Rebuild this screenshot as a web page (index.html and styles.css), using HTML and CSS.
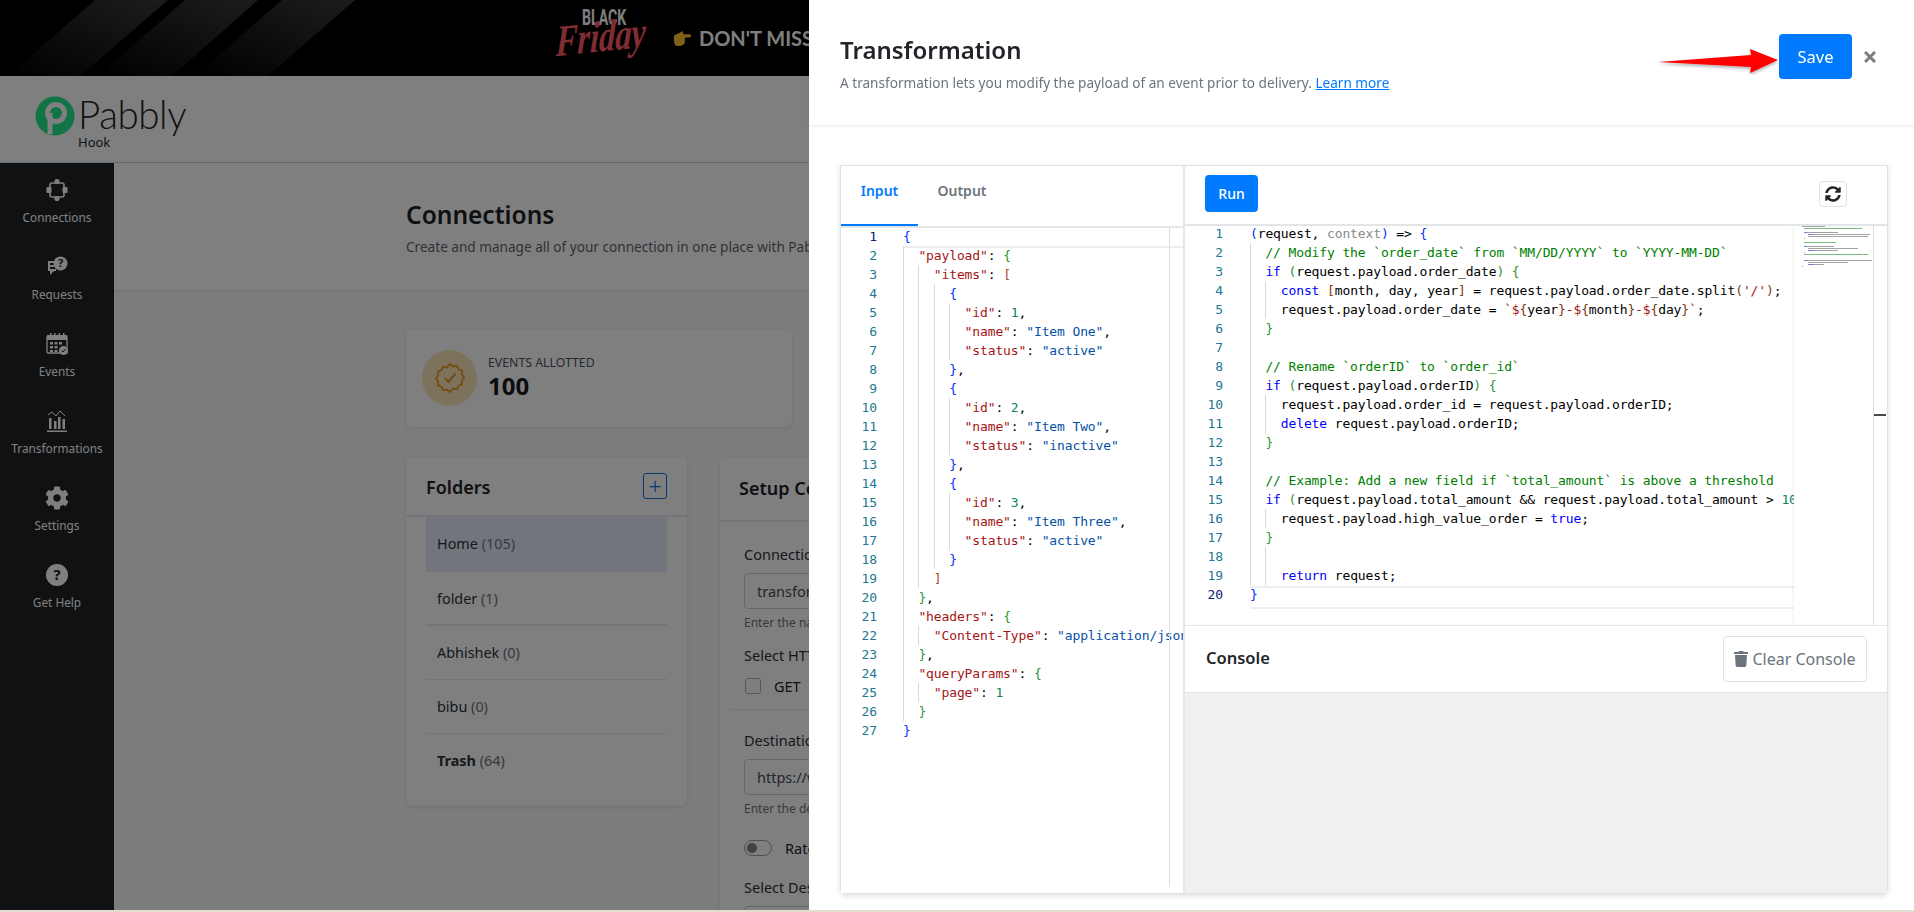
FILE: index.html
```html
<!DOCTYPE html>
<html lang="en">
<head>
<meta charset="utf-8">
<title>Pabbly Hook - Transformation</title>
<link rel="stylesheet" href="styles.css">
</head>
<body>
<div class="app">
  <div class="banner">
    <svg class="stripes" viewBox="0 0 400 76" width="400" height="76"><defs><linearGradient id="sg" x1="0" y1="1" x2="1" y2="0"><stop offset="0" stop-color="#000"/><stop offset="1" stop-color="#3a3a3a"/></linearGradient></defs><polygon points="8,76 95,0 168,0 80,76" fill="url(#sg)"/><polygon points="98,76 185,0 258,0 172,76" fill="url(#sg)"/><polygon points="195,76 282,0 355,0 268,76" fill="url(#sg)"/></svg>
    <div class="promo">
      <div class="bf"><span class="bf-black">BLACK</span><span class="bf-friday">Friday</span></div>
      <svg class="hand" viewBox="0 0 20 17" width="19" height="17"><path d="M1 7Q1 4 4 4L8 2 10 0.500 11 4H18Q20 5 18 7.500H12.500V13Q10.500 16.500 6 16.500H3.500Q1 14.500 1 11Z" fill="#ffc52e"/></svg>
      <span class="promo-text">DON'T MISS OUT</span>
    </div>
  </div>
  <header class="topbar">
    <svg class="logo-mark" viewBox="0 0 40 40" width="40" height="40"><circle cx="20" cy="20" r="19.5" fill="#24e88c"/><circle cx="21" cy="17" r="8.5" fill="none" stroke="#fff" stroke-width="5"/><path d="M12.5 17v21h5V17z" fill="#fff"/></svg>
    <div class="logo-text"><span class="logo-name">Pabbly</span><span class="logo-sub">Hook</span></div>
  </header>
  <div class="layout">
    <nav class="sidebar">
      <a class="nav-item">
        <svg viewBox="0 0 24 24" width="24" height="24" fill="#fff"><rect x="5" y="5" width="14" height="14" rx="2" fill="none" stroke="#fff" stroke-width="1.6"/><circle cx="12" cy="3.5" r="2.6"/><circle cx="12" cy="20.5" r="2.6"/><rect x="1.5" y="9" width="5" height="6" rx="1"/><rect x="17.5" y="9" width="5" height="6" rx="1"/></svg>
        <span>Connections</span>
      </a>
      <a class="nav-item">
        <svg viewBox="0 0 24 24" width="24" height="24" fill="#fff"><circle cx="15.5" cy="8.5" r="7"/><path d="M3 6h6v2H5v2h4v2H5v2h6v2H9l-4 4v-4H3z"/><text x="15.5" y="12" text-anchor="middle" class="svg-q">?</text></svg>
        <span>Requests</span>
      </a>
      <a class="nav-item">
        <svg viewBox="0 0 24 24" width="24" height="24" fill="#fff"><path d="M3 4h18a1 1 0 0 1 1 1v16H3a1 1 0 0 1-1-1V5a1 1 0 0 1 1-1z" fill="none" stroke="#fff" stroke-width="1.3"/><path d="M2 3h20v5H2z"/><path d="M5 1h1.500v3H5zM9 1h1.500v3H9zM13.500 1H15v3h-1.500zM18 1h1.500v3H18z"/><path d="M5 10h3v2.500H5zM9.500 10h3v2.500h-3zM14 10h3v2.500h-3zM5 14h3v2.500H5zM9.500 14h3v2.500h-3zM5 18h3v2H5zM9.500 18h3v2h-3z"/><circle cx="18.500" cy="18.500" r="4.500"/><path d="M16.500 18.500l1.500 1.500 2.500-3" fill="none" stroke="#202226" stroke-width="1"/></svg>
        <span>Events</span>
      </a>
      <a class="nav-item">
        <svg viewBox="0 0 24 24" width="24" height="24" fill="#fff"><path d="M4 9h2.500v11H4zM9 12h2.500v8H9zM13 8h2.500v12H13zM17.500 10H20v10h-2.500zM2 21.500h20V23H2z"/><path d="M3 6l4-3 4 4 4-5 5 5" fill="none" stroke="#fff" stroke-width="1"/></svg>
        <span>Transformations</span>
      </a>
      <a class="nav-item">
        <svg viewBox="0 0 512 512" width="24" height="24" fill="#fff"><path d="M487.400 315.700l-42.600-24.600c4.300-23.200 4.300-47 0-70.200l42.600-24.600c4.900-2.800 7.100-8.600 5.500-14-11.100-35.600-30-67.800-54.700-94.600-3.800-4.100-10-5.100-14.800-2.300L380.800 110c-17.900-15.400-38.500-27.300-60.800-35.100V25.800c0-5.600-3.900-10.500-9.400-11.700-36.700-8.200-74.300-7.800-109.200 0-5.500 1.200-9.400 6.100-9.400 11.700V75c-22.200 7.900-42.800 19.800-60.800 35.100L88.700 85.500c-4.900-2.800-11-1.900-14.800 2.300-24.700 26.700-43.600 58.900-54.700 94.600-1.700 5.400.6 11.200 5.500 14L67.300 221c-4.300 23.200-4.300 47 0 70.200l-42.600 24.600c-4.900 2.800-7.100 8.600-5.500 14 11.100 35.600 30 67.800 54.700 94.600 3.800 4.100 10 5.100 14.800 2.300l42.600-24.600c17.900 15.400 38.500 27.300 60.800 35.100v49.200c0 5.600 3.900 10.500 9.400 11.700 36.700 8.200 74.300 7.800 109.200 0 5.500-1.200 9.400-6.100 9.400-11.700v-49.200c22.200-7.900 42.800-19.800 60.800-35.100l42.600 24.600c4.900 2.800 11 1.900 14.800-2.300 24.700-26.700 43.600-58.900 54.700-94.600 1.500-5.500-.7-11.300-5.600-14.100zM256 336c-44.100 0-80-35.900-80-80s35.900-80 80-80 80 35.900 80 80-35.900 80-80 80z"/></svg>
        <span>Settings</span>
      </a>
      <a class="nav-item">
        <svg viewBox="0 0 24 24" width="24" height="24"><circle cx="12" cy="12" r="11" fill="#fff"/><text x="12" y="17" text-anchor="middle" class="svg-help">?</text></svg>
        <span>Get Help</span>
      </a>
    </nav>
    <main class="content">
      <section class="page-head">
        <h1>Connections</h1>
        <p>Create and manage all of your connection in one place with Pabbly Hook.</p>
      </section>
      <section class="page-body">
        <div class="stat-card">
          <div class="stat-icon"><svg viewBox="0 0 32 32" width="32" height="32" fill="none" stroke="#e8961e" stroke-width="1.700"><path d="M16 2l3 2.500 3.800-.8 1.700 3.500 3.600 1.400-.3 3.900 2.400 3-2.400 3 .3 3.900-3.600 1.400-1.700 3.500-3.800-.8L16 30l-3-2.500-3.800.8-1.700-3.500-3.600-1.400.3-3.900-2.400-3 2.400-3-.3-3.900 3.600-1.400 1.700-3.500 3.800.8z"/><path d="M11 16.500l3.500 3.500 7-8.500" stroke-width="2"/></svg></div>
          <div class="stat-text"><span class="stat-label">EVENTS ALLOTTED</span><strong class="stat-value">100</strong></div>
        </div>
        <div class="columns">
          <aside class="folders">
            <div class="folders-head"><h2>Folders</h2><button class="plus-btn">+</button></div>
            <ul class="folder-list">
              <li class="active">Home <em>(105)</em></li>
              <li>folder <em>(1)</em></li>
              <li>Abhishek <em>(0)</em></li>
              <li>bibu <em>(0)</em></li>
              <li class="trash"><b>Trash</b> <em>(64)</em></li>
            </ul>
          </aside>
          <section class="setup">
            <h2 class="setup-title">Setup Connection</h2>
            <div class="setup-body">
              <label class="field-label">Connection Name</label>
              <div class="input">transformation connection</div>
              <small class="hint">Enter the name of the connection</small>
              <label class="field-label second">Select HTTP Method</label>
              <div class="check-row"><span class="check"></span><span>GET</span></div>
              <hr class="setup-rule">
              <label class="field-label">Destination URL</label>
              <div class="input">https://webhook.site/example</div>
              <small class="hint">Enter the destination URL</small>
              <div class="toggle-row"><span class="toggle"></span><span>Rate Limit</span></div>
              <label class="field-label third">Select Destination</label>
              <div class="input"></div>
            </div>
          </section>
        </div>
      </section>
    </main>
  </div>
</div>
<div class="backdrop"></div>
<aside class="drawer">
  <header class="drawer-head">
    <div>
      <h2>Transformation</h2>
      <p>A transformation lets you modify the payload of an event prior to delivery. <a>Learn more</a></p>
    </div>
    <div class="drawer-actions">
      <button class="btn-save">Save</button>
      <svg class="close" viewBox="0 0 12 12" width="12" height="12"><path d="M1 1l10 10M11 1L1 11" stroke="#7d7d7d" stroke-width="3"/></svg>
    </div>
    <svg class="arrow" viewBox="0 0 122 26" width="122" height="26"><defs><filter id="as" x="-5%" y="-20%" width="110%" height="160%"><feDropShadow dx="0" dy="2" stdDeviation="1.500" flood-color="#000" flood-opacity=".3"/></filter></defs><polygon points="0,13 93,6 92,0 120,11 92,24 93,18" fill="#f00" filter="url(#as)"/></svg>
  </header>
  <div class="drawer-body">
    <div class="editor-card">
      <section class="pane-left">
        <div class="tabs"><span class="tab active">Input</span><span class="tab">Output</span></div>
        <div class="code-area left-code">
          <div class="gutter"><i class="cur">1</i><i>2</i><i>3</i><i>4</i><i>5</i><i>6</i><i>7</i><i>8</i><i>9</i><i>10</i><i>11</i><i>12</i><i>13</i><i>14</i><i>15</i><i>16</i><i>17</i><i>18</i><i>19</i><i>20</i><i>21</i><i>22</i><i>23</i><i>24</i><i>25</i><i>26</i><i>27</i></div>
<pre class="code"><span class="line hl"><b class="bl">{</b></span>
<span class="line">  <u class="k">"payload"</u>: <b class="gr">{</b></span>
<span class="line">    <u class="k">"items"</u>: <b class="br">[</b></span>
<span class="line">      <b class="bl">{</b></span>
<span class="line">        <u class="k">"id"</u>: <u class="n">1</u>,</span>
<span class="line">        <u class="k">"name"</u>: <u class="s">"Item One"</u>,</span>
<span class="line">        <u class="k">"status"</u>: <u class="s">"active"</u></span>
<span class="line">      <b class="bl">}</b>,</span>
<span class="line">      <b class="bl">{</b></span>
<span class="line">        <u class="k">"id"</u>: <u class="n">2</u>,</span>
<span class="line">        <u class="k">"name"</u>: <u class="s">"Item Two"</u>,</span>
<span class="line">        <u class="k">"status"</u>: <u class="s">"inactive"</u></span>
<span class="line">      <b class="bl">}</b>,</span>
<span class="line">      <b class="bl">{</b></span>
<span class="line">        <u class="k">"id"</u>: <u class="n">3</u>,</span>
<span class="line">        <u class="k">"name"</u>: <u class="s">"Item Three"</u>,</span>
<span class="line">        <u class="k">"status"</u>: <u class="s">"active"</u></span>
<span class="line">      <b class="bl">}</b></span>
<span class="line">    <b class="br">]</b></span>
<span class="line">  <b class="gr">}</b>,</span>
<span class="line">  <u class="k">"headers"</u>: <b class="gr">{</b></span>
<span class="line">    <u class="k">"Content-Type"</u>: <u class="s">"application/json"</u></span>
<span class="line">  <b class="gr">}</b>,</span>
<span class="line">  <u class="k">"queryParams"</u>: <b class="gr">{</b></span>
<span class="line">    <u class="k">"page"</u>: <u class="n">1</u></span>
<span class="line">  <b class="gr">}</b></span>
<span class="line"><b class="bl">}</b></span></pre>
          <div class="guides-left"></div>
        </div>
      </section>
      <section class="pane-right">
        <div class="run-bar">
          <button class="btn-run">Run</button>
          <button class="btn-refresh"><svg viewBox="0 0 512 512" width="16" height="16" fill="#212529"><path d="M370.720 133.280C339.458 104.008 298.888 87.962 255.848 88c-77.458.068-144.328 53.178-162.791 126.850-1.344 5.363-6.122 9.150-11.651 9.150H24.103c-7.498 0-13.194-6.807-11.807-14.176C33.933 94.924 134.813 8 256 8c66.448 0 126.791 26.136 171.315 68.685L463.030 40.970C478.149 25.851 504 36.559 504 57.941V192c0 13.255-10.745 24-24 24H345.941c-21.382 0-32.090-25.851-16.971-40.971l41.750-41.749zM32 296h134.059c21.382 0 32.090 25.851 16.971 40.971l-41.750 41.750c31.262 29.273 71.835 45.319 114.876 45.280 77.418-.070 144.315-53.144 162.787-126.849 1.344-5.363 6.122-9.150 11.651-9.150h57.304c7.498 0 13.194 6.807 11.807 14.176C478.067 417.076 377.187 504 256 504c-66.448 0-126.791-26.136-171.315-68.685L48.970 471.030C33.851 486.149 8 475.441 8 454.059V320c0-13.255 10.745-24 24-24z"/></svg></button>
        </div>
        <div class="code-area right-code">
          <div class="gutter"><i>1</i><i>2</i><i>3</i><i>4</i><i>5</i><i>6</i><i>7</i><i>8</i><i>9</i><i>10</i><i>11</i><i>12</i><i>13</i><i>14</i><i>15</i><i>16</i><i>17</i><i>18</i><i>19</i><i class="cur">20</i></div>
          <div class="code-clip">
<pre class="code"><span class="line"><b class="bl">(</b>request, <u class="dim">context</u><b class="bl">)</b> =&gt; <b class="bl">{</b></span>
<span class="line">  <u class="c">// Modify the `order_date` from `MM/DD/YYYY` to `YYYY-MM-DD`</u></span>
<span class="line">  <u class="kw">if</u> <b class="gr">(</b>request.payload.order_date<b class="gr">)</b> <b class="gr">{</b></span>
<span class="line">    <u class="kw">const</u> <b class="br">[</b>month, day, year<b class="br">]</b> = request.payload.order_date.split<b class="br">(</b><u class="str">'/'</u><b class="br">)</b>;</span>
<span class="line">    request.payload.order_date = <u class="str">`$</u><b class="br">{</b>year<b class="br">}</b><u class="str">-$</u><b class="br">{</b>month<b class="br">}</b><u class="str">-$</u><b class="br">{</b>day<b class="br">}</b><u class="str">`</u>;</span>
<span class="line">  <b class="gr">}</b></span>
<span class="line"> </span>
<span class="line">  <u class="c">// Rename `orderID` to `order_id`</u></span>
<span class="line">  <u class="kw">if</u> <b class="gr">(</b>request.payload.orderID<b class="gr">)</b> <b class="gr">{</b></span>
<span class="line">    request.payload.order_id = request.payload.orderID;</span>
<span class="line">    <u class="kw">delete</u> request.payload.orderID;</span>
<span class="line">  <b class="gr">}</b></span>
<span class="line"> </span>
<span class="line">  <u class="c">// Example: Add a new field if `total_amount` is above a threshold</u></span>
<span class="line">  <u class="kw">if</u> <b class="gr">(</b>request.payload.total_amount &amp;&amp; request.payload.total_amount &gt; <u class="n">1000</u><b class="gr">)</b> <b class="gr">{</b></span>
<span class="line">    request.payload.high_value_order = <u class="kw">true</u>;</span>
<span class="line">  <b class="gr">}</b></span>
<span class="line"> </span>
<span class="line">    <u class="kw">return</u> request;</span>
<span class="line"><b class="bl">}</b></span></pre>
            <div class="guides-right"></div>
          </div>
          <div class="minimap" aria-hidden="true">
            <svg viewBox="0 0 78 42" width="78" height="42"><path class="mm-ink" d="M8 .5h23M10 6.500h34M14 8.500h62M14 10.500h60M10 12.500h1M10 20.500h30M14 22.500h50M14 24.500h30M10 26.500h1M10 34.500h68M14 36.500h40M14 38.500h16M8 40.500h1"/><path class="mm-green" d="M10 2.500h58M10 16.500h32M10 28.500h64"/><path class="mm-blue" d="M10 6.500h3M14 8.500h5M10 20.500h3M14 24.500h6M10 34.500h3M14 38.500h6"/></svg>
          </div>
          <div class="scroll-strip"><span class="tick"></span></div>
        </div>
        <div class="console-bar">
          <h3>Console</h3>
          <button class="btn-clear"><svg viewBox="0 0 448 512" width="14" height="16" fill="#6c757d"><path d="M432 32H312l-9.400-18.700A24 24 0 0 0 281.100 0H166.800a23.700 23.700 0 0 0-21.400 13.300L136 32H16A16 16 0 0 0 0 48v32a16 16 0 0 0 16 16h416a16 16 0 0 0 16-16V48a16 16 0 0 0-16-16zM53.200 467a48 48 0 0 0 47.900 45h245.800a48 48 0 0 0 47.900-45L416 128H32z"/></svg>Clear Console</button>
        </div>
        <div class="console-out"></div>
      </section>
    </div>
  </div>
</aside>
<div class="screen-edge"></div>
</body>
</html>
```

FILE: styles.css
```css
* { box-sizing: border-box; }
html, body { margin: 0; height: 100%; overflow: hidden; }
body { font-family: "Noto Sans", "Open Sans", sans-serif; color: #212529; background: #f8f9fb; }
h1, h2, h3, p, ul { margin: 0; padding: 0; }
button { font-family: inherit; }

.app { height: 912px; display: flex; flex-direction: column; overflow: hidden; }

/* Top promo */
.banner { position: relative; flex: 0 0 76px; background: #000; overflow: hidden; }
.stripes { display: block; }
.promo { position: absolute; left: 556px; top: 0; height: 76px; display: flex; align-items: center; white-space: nowrap; }
.bf { position: relative; width: 104px; height: 76px; }
.bf-black { position: absolute; left: 26px; top: 6px; font: 700 22px/24px "Roboto", sans-serif; color: #fff; transform: scaleX(.64); transform-origin: left center; }
.bf-friday { position: absolute; left: 0; top: 20px; font: italic 700 44px/44px "Liberation Serif", serif; color: #ff5a64; transform: rotate(-6deg) skewX(-8deg) scaleX(.74); transform-origin: left center; }
.hand { margin-left: 13px; flex: none; }
.promo-text { margin-left: 7px; font: 700 20px/28px "Lato", sans-serif; color: #fff; }

/* Logo bar */
.topbar { flex: 0 0 87px; background: #fff; border-bottom: 1px solid #c9d5ea; display: flex; align-items: flex-start; padding: 20px 0 0 35px; gap: 3px; }
.logo-mark { display: block; }
.logo-text { display: flex; flex-direction: column; }
.logo-name { font: 300 38.500px/42px "Lato", sans-serif; color: #20252b; margin-top: -3px; letter-spacing: -.4px; }
.logo-sub { font: 400 13px/16px "Noto Sans", sans-serif; color: #20252b; margin-top: -1px; }

.layout { flex: 1; display: flex; min-height: 0; }
.sidebar { flex: 0 0 114px; background: #202226; display: flex; flex-direction: column; padding-top: 15px; }
.nav-item { height: 77px; display: flex; flex-direction: column; align-items: center; color: #fff; font-size: 11.800px; line-height: 16px; }
.nav-item svg { flex: none; margin-bottom: 7px; }
.svg-q { font: 700 11px "Noto Sans", sans-serif; fill: #202226; }
.svg-help { font: 700 15px "Noto Sans", sans-serif; fill: #202226; }

.content { flex: 1; min-width: 0; display: flex; flex-direction: column; }
.page-head { height: 127px; background: #fff; padding: 34px 0 0 292px; box-shadow: 0 1px 3px rgba(60,70,90,.12); }
.page-head h1 { font-size: 24.500px; line-height: 36px; font-weight: 600; color: #1d2228; }
.page-head p { font-size: 13.600px; line-height: 20px; margin-top: 4px; color: #5d6672; white-space: nowrap; }
.page-body { padding: 39px 0 0 292px; flex: 1; min-height: 0; }

.stat-card { width: 386px; height: 98px; background: #fff; border-radius: 6px; box-shadow: 0 1px 4px rgba(60,70,90,.15); display: flex; align-items: center; padding-left: 16px; gap: 11px; }
.stat-icon { width: 55px; height: 56px; border-radius: 50%; background: #fbe4b8; display: flex; align-items: center; justify-content: center; }
.stat-text { display: flex; flex-direction: column; }
.stat-label { font-size: 12.300px; line-height: 16px; color: #4b5563; }
.stat-value { font-size: 24px; line-height: 30px; font-weight: 700; color: #14181d; }

.columns { display: flex; gap: 33px; margin-top: 30px; align-items: flex-start; }
.folders { flex: 0 0 281px; height: 349px; background: #fff; border-radius: 6px; box-shadow: 0 1px 4px rgba(60,70,90,.15); }
.folders-head { height: 60px; padding: 0 20px 0 20px; display: flex; align-items: center; justify-content: space-between; border-bottom: 2px solid #e6ebf4; }
.folders-head h2 { font-size: 18px; line-height: 26px; padding-top: 2px; font-weight: 600; color: #1d2228; }
.plus-btn { width: 24px; height: 26px; padding: 0; border: 1px solid #0a6fe0; border-radius: 3px; background: #fff; color: #0a6fe0; font-size: 23px; font-weight: 300; line-height: 22px; }
.folder-list { list-style: none; padding: 0 20px; }
.folder-list li { height: 54px; line-height: 54px; padding-left: 11px; font-size: 14.400px; color: #2b3138; border-bottom: 1px solid #e3e8f1; }
.folder-list li em { font-style: normal; color: #6b7480; }
.folder-list li.active { height: 55px; background: #e4ebf6; border-bottom: 0; }
.folder-list li.active + li { border-bottom: 2px solid #e6ebf4; }
.folder-list li.trash { border-bottom: 0; }

.setup { flex: 0 0 700px; height: 600px; background: #fff; border-radius: 6px; box-shadow: 0 1px 4px rgba(60,70,90,.15); }
.setup-title { height: 65px; line-height: 62px; padding-left: 19px; font-size: 18px; font-weight: 600; border-bottom: 2px solid #e6ebf4; color: #1d2228; white-space: nowrap; }
.setup-body { padding: 22px 25px 0 24px; display: flex; flex-direction: column; align-items: stretch; }
.field-label { font-size: 14.500px; line-height: 20px; color: #2b3138; }
.field-label.second { margin-top: 14px; }
.field-label.third { margin-top: 19px; }
.input { height: 36px; flex: none; margin-top: 9px; padding: 0 12px; line-height: 34px; border: 1px solid #c8ced8; border-radius: 4px; font-size: 14.500px; color: #444c56; }
.hint { font-size: 12px; line-height: 16px; margin-top: 6px; color: #6c757d; }
.check-row { display: flex; align-items: center; gap: 13px; margin-top: 11px; font-size: 14.500px; line-height: 20px; }
.check { width: 16px; height: 16px; border: 1px solid #aab1bc; border-radius: 3px; margin-left: 1px; }
.setup-rule { margin: 13px 0 0 -15px; border: 0; border-top: 1px solid #e6ebf4; height: 21px; flex: none; }
.toggle-row { display: flex; align-items: center; gap: 13px; margin-top: 21px; font-size: 14.500px; line-height: 20px; }
.toggle { width: 28px; height: 16px; border: 1px solid #9aa2ad; border-radius: 9px; position: relative; }
.toggle::before { content: ""; position: absolute; left: 2px; top: 2px; width: 10px; height: 10px; border-radius: 50%; background: #7e8793; }

/* Overlays */
.backdrop { position: fixed; inset: 0; background: rgba(0,0,0,.5); }
.screen-edge { position: fixed; left: 0; right: 0; bottom: 0; height: 2px; background: #e3dcd0; }

.drawer { position: fixed; left: 809px; top: 0; width: 1105px; height: 912px; background: #fff; display: flex; flex-direction: column; }
.drawer-head { position: relative; flex: 0 0 125px; padding: 34px 38px 0 31px; display: flex; justify-content: space-between; align-items: flex-start; box-shadow: 0 1px 3px rgba(0,0,0,.1); }
.drawer-head h2 { font-size: 24px; line-height: 32px; font-weight: 600; color: #212529; }
.drawer-head p { font-size: 13.600px; line-height: 20px; margin-top: 7px; color: #6c757d; }
.drawer-head a { color: #007bff; text-decoration: underline; }
.drawer-actions { display: flex; align-items: center; gap: 12px; }
.btn-save { width: 73px; height: 45px; border: 0; border-radius: 4px; background: #007bff; color: #fff; font-size: 16.500px; }
.close { display: block; }
.arrow { position: absolute; left: 849px; top: 49px; }

.drawer-body { flex: 1; padding: 40px 26px 18px 31px; min-height: 0; }
.editor-card { height: 100%; display: flex; border: 1px solid #e0e2e6; border-radius: 0 0 5px 5px; box-shadow: 0 2px 5px rgba(40,50,70,.16); }
.pane-left { flex: 0 0 344px; display: flex; flex-direction: column; min-height: 0; border-right: 2px solid #e4e5e9; }
.tabs { flex: 0 0 60px; display: flex; border-bottom: 2px solid #e4e5e9; }
.tab { height: 60px; padding: 13px 0 0; font-size: 14px; line-height: 24px; font-weight: 600; color: #6c757d; text-align: center; }
.tab:first-child { width: 77px; color: #007bff; border-bottom: 2px solid #007bff; }
.tab:nth-child(2) { width: 62px; margin-left: 13px; }

.code-area { position: relative; display: flex; flex: 1; min-height: 0; overflow: hidden; background: #fff; }
.gutter { flex: none; display: flex; flex-direction: column; margin-top: -2px; text-align: right; }
.gutter i { font: 400 13px/19px "DejaVu Sans Mono", "Liberation Mono", monospace; letter-spacing: -.126px; color: #237893; height: 19px; flex: none; }
.gutter i.cur { color: #0b216f; }
.code { position: relative; margin: -2px 0 0; font: 400 13px/19px "DejaVu Sans Mono", "Liberation Mono", monospace; letter-spacing: -.126px; color: #000; white-space: pre; }
.code b { font-weight: 400; }
.code u { text-decoration: none; }
.line { display: inline-block; height: 19px; vertical-align: top; }
.k { color: #a31515; } .s { color: #0451a5; } .n { color: #098658; }
.bl { color: #0431fa; } .gr { color: #319331; } .br { color: #7b3814; }
.pane-left .br { color: #a0522d; }
.c { color: #008000; } .kw { color: #0000ff; } .str { color: #a31515; } .dim { color: #8a8a8a; }

.left-code .gutter { width: 36px; margin: -1px 26px 0 0; }
.left-code .code { flex: none; max-width: 280px; overflow: hidden; margin-top: -1px; }
.left-code::before { content: ""; position: absolute; left: 62px; right: 0; top: 0; height: 18px; border-bottom: 2px solid #eee; }
.left-code::after { content: ""; position: absolute; left: 328px; top: 0; bottom: 6px; width: 1px; background: #dcdcdc; }
.guides-left { position: absolute; inset: 0; pointer-events: none;
  background:
    linear-gradient(#d9d9d9,#d9d9d9) 62px 18px/1px 475px no-repeat,
    linear-gradient(#d9d9d9,#d9d9d9) 77px 37px/1px 323px no-repeat,
    linear-gradient(#d9d9d9,#d9d9d9) 77px 398px/1px 19px no-repeat,
    linear-gradient(#d9d9d9,#d9d9d9) 77px 455px/1px 19px no-repeat,
    linear-gradient(#d9d9d9,#d9d9d9) 93px 56px/1px 285px no-repeat,
    linear-gradient(#d9d9d9,#d9d9d9) 108px 75px/1px 57px no-repeat,
    linear-gradient(#d9d9d9,#d9d9d9) 108px 170px/1px 57px no-repeat,
    linear-gradient(#d9d9d9,#d9d9d9) 108px 265px/1px 57px no-repeat; }

.pane-right { flex: 1; min-width: 0; display: flex; flex-direction: column; }
.run-bar { flex: 0 0 60px; display: flex; align-items: center; justify-content: space-between; padding: 0 40px 3px 20px; border-bottom: 2px solid #e4e5e9; }
.btn-run { width: 53px; height: 37px; border: 0; border-radius: 4px; background: #007bff; color: #fff; font-size: 14px; font-weight: 500; }
.btn-refresh { width: 28px; height: 26px; padding: 0; border: 1px solid #dee2e6; border-radius: 4px; background: #fff; display: flex; align-items: center; justify-content: center; }

.right-code { flex: 0 0 399px; }
.right-code .gutter { width: 38px; margin-right: 27px; }
.code-clip { position: relative; flex: none; width: 544px; overflow: hidden; height: 100%; }
.code-clip::after { content: ""; position: absolute; left: 0; right: 0; top: 360px; height: 19px; border-top: 2px solid #eee; border-bottom: 2px solid #eee; }
.guides-right { position: absolute; inset: 0; pointer-events: none;
  background:
    linear-gradient(#d9d9d9,#d9d9d9) 0 17px/1px 342px no-repeat,
    linear-gradient(#d9d9d9,#d9d9d9) 15px 55px/1px 38px no-repeat,
    linear-gradient(#d9d9d9,#d9d9d9) 15px 169px/1px 38px no-repeat,
    linear-gradient(#d9d9d9,#d9d9d9) 15px 283px/1px 19px no-repeat,
    linear-gradient(#d9d9d9,#d9d9d9) 15px 321px/1px 38px no-repeat; }
.minimap { flex: none; width: 80px; height: 100%; border-right: 1px solid #dcdcdc; box-shadow: -2px 0 3px rgba(0,0,0,.04); position: relative; }
.minimap svg { display: block; }
.mm-ink { stroke: #8a8a8a; stroke-width: .8; fill: none; }
.mm-green { stroke: #55aa60; stroke-width: .8; fill: none; }
.mm-blue { stroke: #5a78dc; stroke-width: .8; fill: none; }
.scroll-strip { flex: 1; position: relative; }
.tick { position: absolute; left: 0; right: 1px; top: 188px; height: 2px; background: #4a4a4a; }

.console-bar { flex: 0 0 68px; display: flex; align-items: center; justify-content: space-between; padding: 0 20px 0 21px; border-top: 1px solid #e4e5e9; border-bottom: 1px solid #e4e5e9; }
.console-bar h3 { font-size: 16.500px; font-weight: 600; color: #212529; margin-top: -4px; }
.btn-clear { width: 144px; height: 46px; padding: 0; display: flex; align-items: center; justify-content: center; gap: 4px; background: #fff; border: 1px solid #dee2e6; border-radius: 4px; color: #6c757d; font-size: 16px; }
.console-out { flex: 1; background: #f0f0f1; }
```
